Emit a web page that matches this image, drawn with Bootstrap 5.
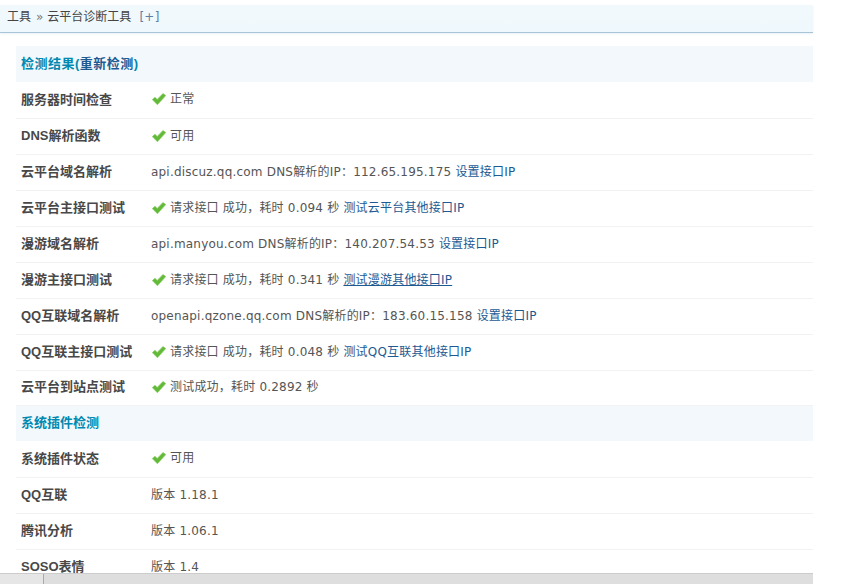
<!DOCTYPE html>
<html lang="zh">
<head>
<meta charset="utf-8">
<title>云平台诊断工具</title>
<link rel="stylesheet" href="https://cdn.jsdelivr.net/npm/bootstrap@5.3.0/dist/css/bootstrap.min.css">
<style>
html,body{height:584px;overflow:hidden;background:#fff;}
body{font-family:"DejaVu Sans","Noto Sans CJK SC",sans-serif;font-size:12px;color:#555;}
.shell{width:813px;height:584px;padding-top:5px;}
.crumbs{height:28px;padding:0 7px;background:linear-gradient(#f1f9fd,#eff8fc);border-bottom:1px solid #a9c4d6;box-shadow:0 1px 2px #e8f1f7;color:#444;line-height:25px;font-size:12px;}
.crumbs .sep{color:#777;margin:0 4px 0 5px;}
.crumbs .more{color:#5f7ea3;margin-left:8px;text-decoration:none;letter-spacing:.3px;}
.viewport{height:540px;overflow:hidden;padding:13px 0 0 16px;}
.diag{width:100%;table-layout:fixed;border-collapse:collapse;margin:0;}
.diag col.c1{width:130px;}
.diag td{height:36px;padding:0 0 0 5px;border-bottom:1px solid #f2f2f2;vertical-align:middle;color:#555;background:#fff;white-space:nowrap;}
.diag td.lab{font-family:"Liberation Sans","Noto Sans CJK SC",sans-serif;font-size:13px;font-weight:700;color:#484848;padding-bottom:1px;}
.diag td.val{padding-left:5px;letter-spacing:.2px;padding-bottom:1px;}
.diag tr.head td{background:#f3f8fd;border-bottom:0;font-family:"Liberation Sans","Noto Sans CJK SC",sans-serif;font-size:13px;font-weight:700;color:#0089b0;padding-bottom:1px;}
.diag tr.head.lead1 td{letter-spacing:.5px;}
.diag tr.short td{height:35px;}
.diag a{color:#1d5a92;text-decoration:none;}
.diag a.hov{text-decoration:underline;}
.diag .alt{color:#1d5a92;}
.tick{width:14px;height:12px;margin:0 4px 0 1px;vertical-align:-2px;}
.hbar{height:11px;background:#dedede;border-top:1px solid #ccc;width:813px;position:absolute;left:0;bottom:0;}
.hthumb{width:44px;height:10px;border-right:1px solid #aaa;background:#e6e6e6;}
</style>
</head>
<body class="m-0">
<svg width="0" height="0" class="d-block position-absolute"><defs>
<symbol id="ok" viewBox="0 0 14 12"><path d="M.3 6.6 3 4.2l2.2 2.2L11 .4l2.8 2.2L5.4 11.8z" fill="#62b93a" stroke="#8ed064" stroke-width=".7" stroke-linejoin="round"/></symbol>
</defs></svg>
<div class="shell">
<div class="crumbs">工具<span class="sep">»</span>云平台诊断工具<a class="more" href="#">[+]</a></div>
<div class="viewport">
<table class="diag">
<colgroup><col class="c1"><col></colgroup>
<tr class="head lead1"><td colspan="2">检测结果(<span class="alt">重新检测</span>)</td></tr>
<tr><td class="lab">服务器时间检查</td><td class="val"><svg class="tick"><use href="#ok"/></svg>正常</td></tr>
<tr><td class="lab">DNS解析函数</td><td class="val"><svg class="tick"><use href="#ok"/></svg>可用</td></tr>
<tr><td class="lab">云平台域名解析</td><td class="val">api.discuz.qq.com DNS解析的IP：112.65.195.175 <a href="#">设置接口IP</a></td></tr>
<tr><td class="lab">云平台主接口测试</td><td class="val"><svg class="tick"><use href="#ok"/></svg>请求接口 成功，耗时 0.094 秒 <a href="#">测试云平台其他接口IP</a></td></tr>
<tr><td class="lab">漫游域名解析</td><td class="val">api.manyou.com DNS解析的IP：140.207.54.53 <a href="#">设置接口IP</a></td></tr>
<tr><td class="lab">漫游主接口测试</td><td class="val"><svg class="tick"><use href="#ok"/></svg>请求接口 成功，耗时 0.341 秒 <a class="hov" href="#">测试漫游其他接口IP</a></td></tr>
<tr><td class="lab">QQ互联域名解析</td><td class="val">openapi.qzone.qq.com DNS解析的IP：183.60.15.158 <a href="#">设置接口IP</a></td></tr>
<tr><td class="lab">QQ互联主接口测试</td><td class="val"><svg class="tick"><use href="#ok"/></svg>请求接口 成功，耗时 0.048 秒 <a href="#">测试QQ互联其他接口IP</a></td></tr>
<tr class="short"><td class="lab">云平台到站点测试</td><td class="val"><svg class="tick"><use href="#ok"/></svg>测试成功，耗时 0.2892 秒</td></tr>
<tr class="head"><td colspan="2">系统插件检测</td></tr>
<tr><td class="lab">系统插件状态</td><td class="val"><svg class="tick"><use href="#ok"/></svg>可用</td></tr>
<tr><td class="lab">QQ互联</td><td class="val">版本 1.18.1</td></tr>
<tr><td class="lab">腾讯分析</td><td class="val">版本 1.06.1</td></tr>
<tr><td class="lab">SOSO表情</td><td class="val">版本 1.4</td></tr>
</table>
</div>
</div>
<div class="hbar"><div class="hthumb"></div></div>
<script src="https://cdn.jsdelivr.net/npm/bootstrap@5.3.0/dist/js/bootstrap.bundle.min.js"></script>
</body>
</html>
